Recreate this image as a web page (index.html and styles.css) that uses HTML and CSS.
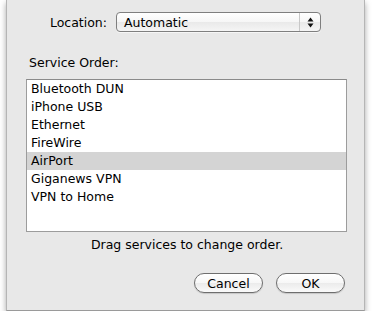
FILE: index.html
```html
<!DOCTYPE html>
<html>
<head>
<meta charset="utf-8">
<link rel="stylesheet" href="styles.css">
</head>
<body>
<div class="sheet">
  <div class="loc-row">
    <span class="loc-label">Location:</span>
    <div class="popup">
      <span class="popup-text">Automatic</span>
      <span class="popup-arrows">
        <svg width="7" height="11" viewBox="0 0 7 11"><path d="M3.5 0.5 L6.5 4.5 L0.5 4.5 Z M3.5 10.5 L6.5 6.5 L0.5 6.5 Z" fill="#111"/></svg>
      </span>
    </div>
  </div>
  <div class="section-label">Service Order:</div>
  <div class="list">
    <div class="row">Bluetooth DUN</div>
    <div class="row">iPhone USB</div>
    <div class="row">Ethernet</div>
    <div class="row">FireWire</div>
    <div class="row selected">AirPort</div>
    <div class="row">Giganews VPN</div>
    <div class="row">VPN to Home</div>
  </div>
  <div class="hint">Drag services to change order.</div>
  <div class="buttons">
    <button class="btn">Cancel</button>
    <button class="btn">OK</button>
  </div>
</div>
</body>
</html>
```
FILE: styles.css
```css
html, body {
  margin: 0;
  padding: 0;
  background: #ffffff;
}
body {
  font-family: "DejaVu Sans", "Liberation Sans", sans-serif;
  font-size: 12.5px;
  color: #000;
}
.sheet {
  margin-left: 6px;
  width: 359px;
  height: 311px;
  box-sizing: border-box;
  background: #e8e8e8;
  border-left: 1px solid #b5b5b5;
  border-right: 1px solid #b5b5b5;
  border-bottom: 1px solid #9a9a9a;
  box-shadow: 0 3px 6px rgba(0,0,0,0.35);
  padding: 12px 19px 0 19px;
  display: flex;
  flex-direction: column;
}
.loc-row {
  display: flex;
  align-items: center;
  justify-content: flex-end;
  gap: 9px;
  height: 20px;
  padding-right: 24px;
}
.popup {
  width: 205px;
  height: 20px;
  box-sizing: border-box;
  border: 1px solid #7f7f7f;
  border-radius: 4px;
  background: linear-gradient(#ffffff, #f6f6f6 50%, #e9e9e9 51%, #f5f5f5);
  display: flex;
  align-items: center;
  box-shadow: 0 1px 0 rgba(255,255,255,0.6);
}
.popup-text {
  flex: 1;
  padding-left: 7px;
}
.popup-arrows {
  width: 20px;
  height: 100%;
  border-left: 1px solid #c8c8c8;
  display: flex;
  align-items: center;
  justify-content: center;
}
.popup-arrows svg { display: block; }
.section-label {
  margin-top: 23px;
  padding-left: 3px;
  height: 16px;
  line-height: 16px;
}
.list {
  margin-top: 8px;
  width: 321px;
  height: 153px;
  box-sizing: border-box;
  background: #fff;
  border: 1px solid #9c9c9c;
  border-top-color: #8a8a8a;
}
.row {
  height: 18px;
  line-height: 18px;
  padding-left: 4px;
}
.row.selected {
  background: #d4d4d4;
}
.hint {
  margin-top: 5px;
  text-align: center;
  height: 16px;
  line-height: 16px;
  padding-left: 3px;
}
.buttons {
  margin-top: 20px;
  display: flex;
  justify-content: flex-end;
  gap: 13px;
}
.btn {
  font-family: "DejaVu Sans", "Liberation Sans", sans-serif;
  font-size: 12.5px;
  color: #000;
  width: 69px;
  height: 20px;
  padding: 0;
  border: 1px solid #6e6e6e;
  border-radius: 10px;
  background: linear-gradient(#ffffff, #f7f7f7 50%, #ebebeb 51%, #fafafa);
  box-shadow: 0 1px 1px rgba(0,0,0,0.15);
}
```
